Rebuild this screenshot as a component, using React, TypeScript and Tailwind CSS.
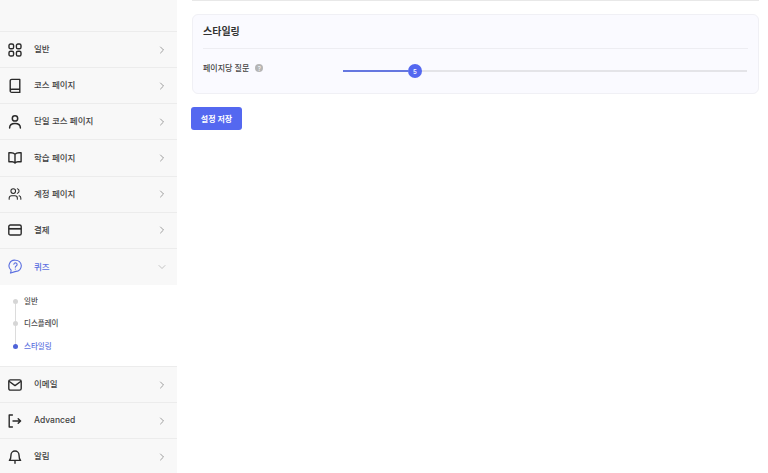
import { ChevronDown, ChevronRight, Users } from "lucide-react";
import type { ReactNode } from "react";

function GridIcon() {
  return (
    <svg width="14" height="14" viewBox="0 0 14 14" fill="none" stroke="#2a2a2a" strokeWidth="1.4">
      <rect x="1" y="1" width="4.6" height="4.8" rx="1.6" />
      <rect x="8.4" y="1" width="4.6" height="4.8" rx="1.6" />
      <rect x="1" y="8.2" width="4.6" height="4.8" rx="1.6" />
      <rect x="8.4" y="8.2" width="4.6" height="4.8" rx="1.6" />
    </svg>
  );
}

function BookIcon() {
  return (
    <svg width="14" height="16" viewBox="0 0 14 16" fill="none" stroke="#2a2a2a" strokeWidth="1.4" strokeLinejoin="round">
      <path d="M2.2 12.6V3a1.6 1.6 0 0 1 1.6-1.6h8v13h-8a1.6 1.6 0 0 1-1.6-1.8Zm0 0a1.6 1.6 0 0 1 1.6-1.4h8" />
    </svg>
  );
}

function PersonIcon() {
  return (
    <svg width="14" height="16" viewBox="0 0 14 16" fill="none" stroke="#2a2a2a" strokeWidth="1.5" strokeLinecap="round">
      <circle cx="7" cy="4.4" r="2.7" />
      <path d="M1.6 14c0-2.800 2.300-4.400 5.400-4.400s5.400 1.600 5.400 4.400" />
    </svg>
  );
}

function OpenBookIcon() {
  return (
    <svg width="14" height="14" viewBox="0 0 14 14" fill="none" stroke="#2a2a2a" strokeWidth="1.4" strokeLinejoin="round">
      <path d="M7 3.200C6 2.200 4.600 1.800 3 1.800H.9v9h3.200c1.200 0 2.200.4 2.900 1.300.7-.9 1.700-1.300 2.900-1.300h3.200v-9H11c-1.600 0-3 .4-4 1.400Zm0 0v8.900" />
    </svg>
  );
}

function CardIcon() {
  return (
    <svg width="14" height="12" viewBox="0 0 14 12" fill="none" stroke="#2a2a2a" strokeWidth="1.4">
      <rect x=".8" y="1" width="12.4" height="10" rx="1.6" />
      <path d="M.8 4.800h12.400" strokeWidth="1.700" />
    </svg>
  );
}

function QuizIcon() {
  return (
    <svg width="14" height="15" viewBox="0 0 14 15" fill="none" stroke="#5b6fe0" strokeWidth="1.1" strokeLinecap="round" strokeLinejoin="round">
      <path d="M7.400 1.200a5.600 5.600 0 0 1 .6 11.200c-1.600.2-3.600 1-5.600 1.700.6-1.200.8-2.200.6-3.100A5.600 5.600 0 0 1 7.400 1.200Z" />
      <path d="M5.900 5.300a1.600 1.600 0 1 1 2.300 1.600c-.6.3-.9.7-.9 1.300" />
      <path d="M7.300 10v.1" />
    </svg>
  );
}

function MailIcon() {
  return (
    <svg width="14" height="12" viewBox="0 0 14 12" fill="none" stroke="#2a2a2a" strokeWidth="1.4" strokeLinejoin="round">
      <rect x=".8" y=".9" width="12.4" height="10.200" rx="1.6" />
      <path d="M1 2.200 7 6.600l6-4.400" />
    </svg>
  );
}

function ExitIcon() {
  return (
    <svg width="14" height="14" viewBox="0 0 14 14" fill="none" stroke="#2a2a2a" strokeWidth="1.4" strokeLinecap="round" strokeLinejoin="round">
      <path d="M4.400 1H1.200v12h3.200" />
      <path d="M5 7h7.600M10.200 4.800 12.600 7l-2.400 2.200" />
    </svg>
  );
}

function BellIcon() {
  return (
    <svg width="14" height="15" viewBox="0 0 14 15" fill="none" stroke="#2a2a2a" strokeWidth="1.4" strokeLinecap="round" strokeLinejoin="round">
      <path d="M3 6a4 4 0 0 1 8 0c0 3 .6 4.400 1.600 5.400H1.400C2.400 10.400 3 9 3 6Z" />
      <path d="M7 11.600v2.600" />
    </svg>
  );
}

function MenuRow({ icon, label }: { icon: ReactNode; label: string }) {
  return (
    <div className="h-[36.15px] flex items-center bg-[#f8f8f8] border-b border-[#ececec] pl-[8px] pr-[9px]">
      <div className="w-[14px] flex items-center justify-center shrink-0">{icon}</div>
      <span className="ml-[12px] text-[8.5px] font-medium flex-1 text-[#3f3f3f]">{label}</span>
      <ChevronRight className="w-[12px] h-[12px] text-[#777]" strokeWidth={1.4} />
    </div>
  );
}

function SubItem({ label, active }: { label: string; active?: boolean }) {
  return (
    <div className="h-[22.5px] flex items-center">
      <span className={`w-[5px] h-[5px] rounded-full z-10 ml-[13px] ${active ? "bg-[#4f63d8]" : "bg-[#d6d6d6]"}`} />
      <span className={`ml-[6px] text-[7.5px] font-medium ${active ? "text-[#5b6fe0]" : "text-[#4a4a4a]"}`}>{label}</span>
    </div>
  );
}

export default function App() {
  return (
    <div className="w-[768px] h-[473px] overflow-hidden bg-white flex font-['Inter','Noto_Sans_CJK_KR',sans-serif]">
      {/* Sidebar */}
      <aside className="w-[177px] shrink-0">
        <div className="h-[32px] bg-[#f8f8f8] border-b border-[#ececec]" />
        <MenuRow icon={<GridIcon />} label="일반" />
        <MenuRow icon={<BookIcon />} label="코스 페이지" />
        <MenuRow icon={<PersonIcon />} label="단일 코스 페이지" />
        <MenuRow icon={<OpenBookIcon />} label="학습 페이지" />
        <MenuRow icon={<Users className="w-[14px] h-[14px] text-[#2a2a2a]" strokeWidth={1.8} />} label="계정 페이지" />
        <MenuRow icon={<CardIcon />} label="결제" />
        <div className="h-[36.15px] flex items-center bg-[#f8f8f8] pl-[8px] pr-[9px]">
          <div className="w-[14px] flex items-center justify-center shrink-0">
            <QuizIcon />
          </div>
          <span className="ml-[12px] text-[8.5px] font-medium flex-1 text-[#5b6fe0]">퀴즈</span>
          <ChevronDown className="w-[12px] h-[12px] text-[#a5a5a5]" strokeWidth={1.3} />
        </div>
        <div className="relative pt-[5px] h-[82px] border-b border-[#ececec]">
          <div className="absolute left-[15px] top-[16px] w-px h-[45px] bg-[#dcdcdc]" />
          <SubItem label="일반" />
          <SubItem label="디스플레이" />
          <SubItem label="스타일링" active />
        </div>
        <MenuRow icon={<MailIcon />} label="이메일" />
        <MenuRow icon={<ExitIcon />} label="Advanced" />
        <MenuRow icon={<BellIcon />} label="알림" />
      </aside>

      {/* Content */}
      <main className="flex-1 pl-[15px] pr-[9px]">
        <div className="h-px bg-[#e8e8e8]" />
        <section className="mt-[13px] h-[80px] rounded-[6px] border border-[#f0f0f5] bg-[#fafaff] px-[10px]">
          <div className="h-[34px] flex items-center border-b border-[#ededf2]">
            <h2 className="text-[10px] font-semibold text-[#333]">스타일링</h2>
          </div>
          <div className="h-[44px] flex items-center">
            <div className="w-[140px] flex items-center gap-[6px] shrink-0 -mt-[6px]">
              <span className="text-[8px] font-medium text-[#444]">페이지당 질문</span>
              <span className="w-[8px] h-[8px] rounded-full bg-[#b5b5b5] text-white text-[6px] flex items-center justify-center">?</span>
            </div>
            <div className="flex-1 h-[2px] mr-px bg-[#e4e4e8] flex items-center">
              <div className="w-[65px] h-[2px] bg-[#6577e0]" />
              <div className="w-[14px] h-[14px] rounded-full bg-[#5468f0] text-white text-[6px] font-semibold flex items-center justify-center shrink-0">
                5
              </div>
            </div>
          </div>
        </section>
        <button className="mt-[13px] -ml-px w-[51px] h-[23px] rounded-[3px] bg-[#5468f0] text-white text-[8px] font-semibold">
          설정 저장
        </button>
      </main>
    </div>
  );
}
